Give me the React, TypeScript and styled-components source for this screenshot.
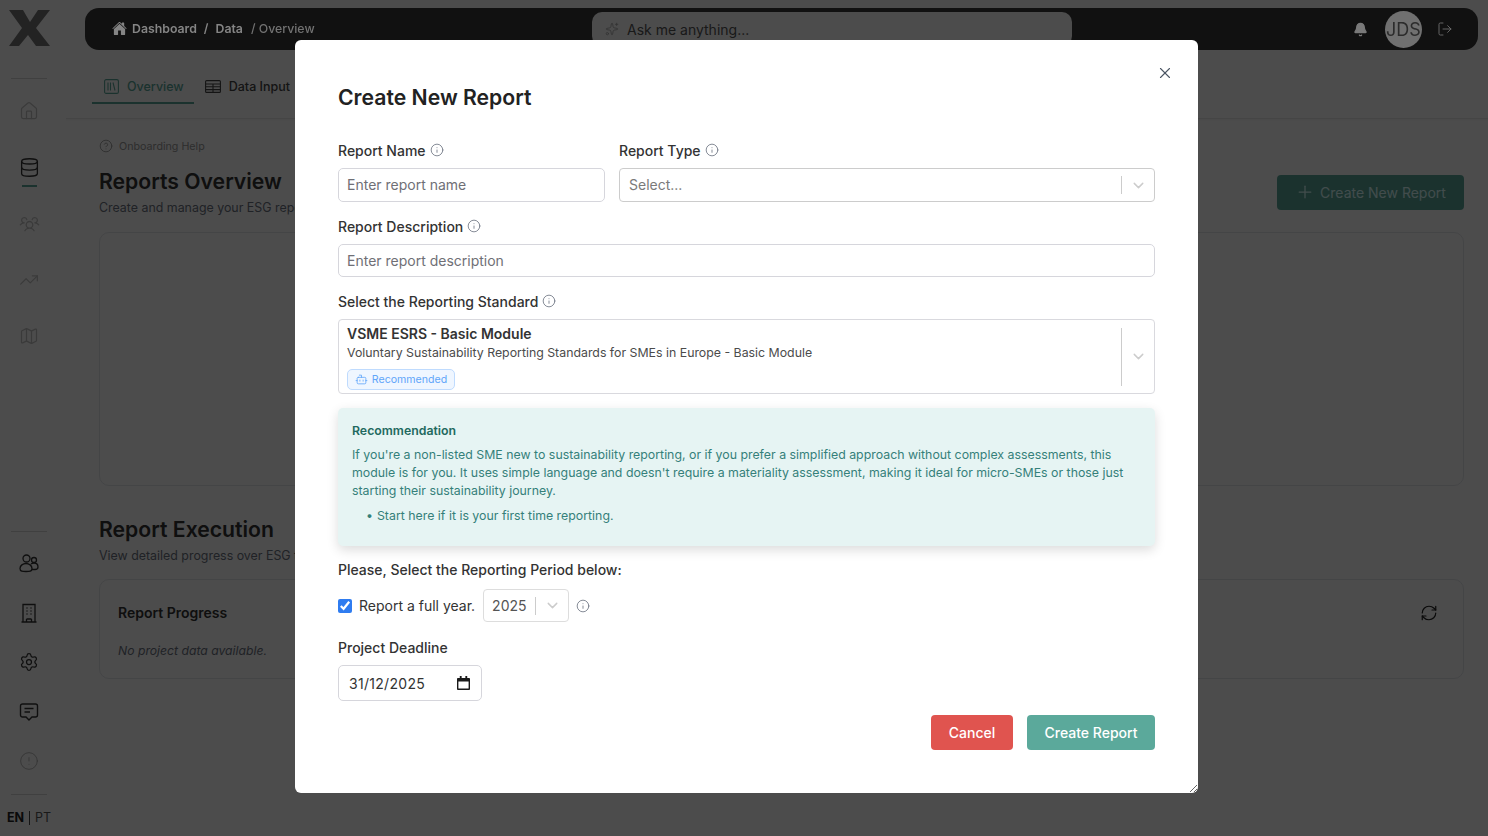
import React from 'react'
import styled, { createGlobalStyle } from 'styled-components'
import {
  Bell,
  Bot,
  ChevronDown,
  CircleAlert,
  CircleHelp,
  Database,
  Home,
  Info,
  LogOut,
  Map as MapIcon,
  Plus,
  RefreshCw,
  Settings,
  Sparkles,
  TrendingUp,
  X,
} from 'lucide-react'
import { IoHome } from 'react-icons/io5'
import { PiUsersThree } from 'react-icons/pi'

const App: React.FC = () => {
  return (
    <>
      <GlobalStyle />
      <Page>
        <Sidebar>
          <LogoBox>
            <svg width="41" height="36" viewBox="0 0 41 36">
              <path d="M0 0H14L21 12 29 0H41L27 18 41 36H27L19 25 10 36H0L13 18Z" fill="#777" />
            </svg>
          </LogoBox>
          <SideRule />
          <SideGroup>
            <SideItem $faint><Home size={20} strokeWidth={1.5} /></SideItem>
            <SideItem $active>
              <Database size={21} strokeWidth={1.5} />
              <ActiveMark />
            </SideItem>
            <SideItem $faint><PiUsersThree size={21} /></SideItem>
            <SideItem $faint><TrendingUp size={20} strokeWidth={1.5} /></SideItem>
            <SideItem $faint><MapIcon size={20} strokeWidth={1.5} /></SideItem>
          </SideGroup>
          <SideSpacer />
          <SideRule />
          <LowerGroup>
            <LowerItem>
              <svg width="20" height="20" viewBox="0 0 20 20" fill="none" stroke="currentColor" strokeWidth="1.300">
                <circle cx="7.500" cy="5.500" r="3.500" />
                <circle cx="15" cy="7" r="2.500" />
                <path d="M1 15.500c0-3 3-5 6-5s6 2 6 5-2.500 3-6 3-6 0-6-3z" />
                <path d="M12 11c1-.7 2-1 3-1 2.500 0 4 1.800 4 4s-1.500 2.500-3 2.500h-3" />
              </svg>
            </LowerItem>
            <LowerItem>
              <svg width="20" height="20" viewBox="0 0 20 20" fill="none" stroke="currentColor" strokeWidth="1.300">
                <path d="M4 19V1.500h12V19M2.500 19h15" />
                <path d="M7.500 16v3M12.500 16v3M7.500 16h5" />
                <path d="M7.500 5h1M11.500 5h1M7.500 8h1M11.500 8h1M7.500 11h1M11.500 11h1" />
              </svg>
            </LowerItem>
            <LowerItem><Settings size={20} strokeWidth={1.5} /></LowerItem>
            <LowerItem>
              <svg width="20" height="20" viewBox="0 0 20 20" fill="none" stroke="currentColor" strokeWidth="1.400">
                <path d="M3.500 2h13A2 2 0 0 1 18.500 4v9a2 2 0 0 1-2 2H13l-3 3-3-3H3.500a2 2 0 0 1-2-2V4a2 2 0 0 1 2-2z" />
                <path d="M5.500 6.500h9M5.500 10h5.500" />
              </svg>
            </LowerItem>
            <LowerItem $faint><CircleAlert size={20} strokeWidth={1} /></LowerItem>
          </LowerGroup>
          <SideRule />
          <Lang>
            <strong>EN</strong>
            <LangBar />
            <span>PT</span>
          </Lang>
        </Sidebar>

        <Main>
          <TopBar>
            <Crumbs>
              <IoHome size={15} />
              <b>Dashboard</b>
              <b>/</b>
              <b>Data</b>
              <CrumbLast>/ Overview</CrumbLast>
            </Crumbs>
            <SearchBox>
              <Sparkles size={14} strokeWidth={1.5} />
              <span>Ask me anything...</span>
            </SearchBox>
            <TopActions>
              <Bell size={15} fill="#7a7a7a" color="#7a7a7a" />
              <Avatar>JDS</Avatar>
              <LogOut size={16} strokeWidth={1.5} />
            </TopActions>
          </TopBar>

          <Tabs>
            <Tab $active>
              <svg width="15" height="15" viewBox="0 0 15 15" fill="none" stroke="currentColor" strokeWidth="1.100">
                <rect x="0.600" y="0.600" width="13.800" height="13.800" rx="1.500" />
                <path d="M4 3.500v8M6.500 3.500v8M9 3.500l2 8" />
              </svg>
              Overview
            </Tab>
            <Tab>
              <svg width="16" height="13" viewBox="0 0 16 13" fill="none" stroke="currentColor" strokeWidth="1.100">
                <rect x="0.600" y="0.600" width="14.800" height="11.800" rx="1" />
                <path d="M0.600 4h14.800M0.600 6.800h14.800M0.600 9.600h14.800M8 4v8.400" />
              </svg>
              Data Input
            </Tab>
          </Tabs>

          <Content>
            <HelpLink>
              <CircleHelp size={14} strokeWidth={1.5} />
              Onboarding Help
            </HelpLink>
            <TitleRow>
              <div>
                <PageTitle>Reports Overview</PageTitle>
                <PageSub>Create and manage your ESG reports</PageSub>
              </div>
              <NewButton>
                <Plus size={20} strokeWidth={1.5} />
                Create New Report
              </NewButton>
            </TitleRow>
            <EmptyCard />
            <PageTitle>Report Execution</PageTitle>
            <PageSub>View detailed progress over ESG topics</PageSub>
            <ProgressCard>
              <div>
                <ProgressTitle>Report Progress</ProgressTitle>
                <NoData>No project data available.</NoData>
              </div>
              <RefreshCw size={18} color="#222" strokeWidth={1.6} />
            </ProgressCard>
          </Content>
        </Main>
      </Page>

      <Overlay>
        <Modal>
          <CloseButton>
            <X size={18} strokeWidth={1.5} />
          </CloseButton>
          <ModalTitle>Create New Report</ModalTitle>

          <TwoCols>
            <Field>
              <Label>Report Name <Info size={14} strokeWidth={1.4} /></Label>
              <TextInput placeholder="Enter report name" readOnly />
            </Field>
            <Field>
              <Label>Report Type <Info size={14} strokeWidth={1.4} /></Label>
              <SelectBox>
                <SelectValue>Select...</SelectValue>
                <SelectDivider />
                <SelectArrow><ChevronDown size={17} strokeWidth={2} /></SelectArrow>
              </SelectBox>
            </Field>
          </TwoCols>

          <Field>
            <Label>Report Description <Info size={14} strokeWidth={1.4} /></Label>
            <TextInput $short placeholder="Enter report description" readOnly />
          </Field>

          <Field>
            <Label>Select the Reporting Standard <Info size={14} strokeWidth={1.4} /></Label>
            <StandardBox>
              <StandardText>
                <StandardName>VSME ESRS - Basic Module</StandardName>
                <StandardDesc>Voluntary Sustainability Reporting Standards for SMEs in Europe - Basic Module</StandardDesc>
                <Badge>
                  <Bot size={13} strokeWidth={1.5} />
                  Recommended
                </Badge>
              </StandardText>
              <SelectDivider $tall />
              <SelectArrow><ChevronDown size={17} strokeWidth={2} /></SelectArrow>
            </StandardBox>
          </Field>

          <RecBox>
            <RecTitle>Recommendation</RecTitle>
            <RecText>
              If you're a non-listed SME new to sustainability reporting, or if you prefer a simplified approach without
              complex assessments, this module is for you. It uses simple language and doesn't require a materiality
              assessment, making it ideal for micro-SMEs or those just starting their sustainability journey.
            </RecText>
            <RecList>
              <li>Start here if it is your first time reporting.</li>
            </RecList>
          </RecBox>

          <PeriodLabel>Please, Select the Reporting Period below:</PeriodLabel>
          <PeriodRow>
            <CheckLabel>
              <Check type="checkbox" defaultChecked />
              Report a full year.
            </CheckLabel>
            <YearSelect>
              <YearValue>2025</YearValue>
              <SelectDivider />
              <SelectArrow><ChevronDown size={17} strokeWidth={2} /></SelectArrow>
            </YearSelect>
            <Info size={14} strokeWidth={1.4} color="#6b7280" />
          </PeriodRow>

          <DeadlineLabel>Project Deadline</DeadlineLabel>
          <DateBox>
            31/12/2025
            <svg width="13" height="14" viewBox="0 0 14 15">
              <path d="M3 0h2v2h4V0h2v2h2a1 1 0 0 1 1 1v11a1 1 0 0 1-1 1H1a1 1 0 0 1-1-1V3a1 1 0 0 1 1-1h2zM1.500 6v7.500h11V6z" fill="#1a1a1a" />
            </svg>
          </DateBox>

          <Footer>
            <CancelButton>Cancel</CancelButton>
            <SubmitButton>Create Report</SubmitButton>
          </Footer>
        </Modal>
      </Overlay>
    </>
  )
}

const GlobalStyle = createGlobalStyle`
  html, body {
    margin: 0;
    height: 100%;
    background: #fff;
  }
  * {
    box-sizing: border-box;
  }
  body {
    font-family: Inter, "Liberation Sans", sans-serif;
    overflow: hidden;
  }
`

const Page = styled.div`
  display: flex;
  height: 836px;
  background: #fff;
`

const Sidebar = styled.aside`
  width: 66px;
  flex: none;
  display: flex;
  flex-direction: column;
  align-items: center;
  padding-right: 8px;
`

const LogoBox = styled.div`
  height: 78px;
  display: flex;
  align-items: flex-start;
  padding-top: 10px;
`

const SideRule = styled.div`
  width: 36px;
  height: 1px;
  flex: none;
  background: #d8d8d8;
`

const SideGroup = styled.div`
  display: flex;
  flex-direction: column;
  align-items: center;
  padding-top: 22px;
  gap: 36.200px;
`

const SideItem = styled.div<{ $faint?: boolean; $active?: boolean }>`
  position: relative;
  display: flex;
  justify-content: center;
  height: 20px;
  color: ${(props) => (props.$faint ? '#c4c4c4' : '#333')};
`

const ActiveMark = styled.span`
  position: absolute;
  left: 3px;
  bottom: -10px;
  width: 15px;
  height: 2px;
  background: #5ba99b;
`

const SideSpacer = styled.div`
  flex: 1;
`

const LowerGroup = styled.div`
  display: flex;
  flex-direction: column;
  align-items: center;
  padding: 21px 0 23px;
  gap: 29.500px;
`

const LowerItem = styled.div<{ $faint?: boolean }>`
  height: 20px;
  color: ${(props) => (props.$faint ? '#aaa' : '#333')};
`

const Lang = styled.div`
  height: 41px;
  padding-top: 4px;
  display: flex;
  align-items: center;
  gap: 5px;
  font-size: 12.500px;
  color: #555;

  strong {
    font-weight: 700;
    color: #222;
  }
`

const LangBar = styled.span`
  width: 1px;
  height: 14px;
  background: #444;
`

const Main = styled.main`
  flex: 1;
  min-width: 0;
  display: flex;
  flex-direction: column;
`

const TopBar = styled.header`
  height: 42px;
  margin: 8px 10px 0 19px;
  padding: 0 25px 0 27px;
  display: flex;
  align-items: center;
  background: #393939;
  border-radius: 14px;
`

/* the breadcrumb and the actions read brighter than the dimming allows */
const Crumbs = styled.div`
  position: relative;
  z-index: 1;
  width: 480px;
  padding-bottom: 2px;
  display: flex;
  align-items: center;
  gap: 7px;
  font-size: 12.300px;
  color: #858585;

  b {
    font-weight: 600;
  }

  svg {
    margin-right: -2px;
  }
`

const CrumbLast = styled.span`
  margin-left: 1px;
  font-weight: 500;
  color: #737373;
`

const SearchBox = styled.div`
  width: 480px;
  height: 34px;
  padding: 0 13px;
  display: flex;
  align-items: center;
  gap: 8px;
  border-radius: 10px;
  background: #fff;
  font-size: 14px;
  color: #555;

  svg {
    color: #aaa;
  }
`

const TopActions = styled.div`
  position: relative;
  z-index: 1;
  margin-left: auto;
  display: flex;
  align-items: center;
  color: #666;
  gap: 16px;
`

const Avatar = styled.div`
  width: 37px;
  height: 37px;
  margin: 0 -1px 0 1px;
  border-radius: 50%;
  background: #707070;
  display: flex;
  align-items: center;
  justify-content: center;
  font-size: 18px;
  color: #2c2c2c;
`

const Tabs = styled.nav`
  height: 68px;
  margin-left: 26px;
  padding-top: 20px;
  display: flex;
  align-items: flex-start;
`

const Tab = styled.div<{ $active?: boolean }>`
  height: 34px;
  padding: 0 10px 0 ${(props) => (props.$active ? '12px' : '11px')};
  display: flex;
  align-items: center;
  gap: 8px;
  font-size: 12.500px;
  font-weight: 500;
  color: ${(props) => (props.$active ? '#5ba99b' : '#444')};
  border-bottom: 2px solid ${(props) => (props.$active ? '#5ba99b' : 'transparent')};
`

const Content = styled.div`
  flex: 1;
  padding: 19px 24px 0 33px;
  border-top: 1px solid #e6e6e6;
  box-shadow: inset 0 4px 4px -4px rgba(0, 0, 0, 0.08);
`

const HelpLink = styled.div`
  display: flex;
  align-items: center;
  gap: 6px;
  height: 16px;
  font-size: 10.700px;
  color: #999;
`

const TitleRow = styled.div`
  margin-top: 12px;
  display: flex;
  align-items: flex-start;
  justify-content: space-between;
`

const PageTitle = styled.h2`
  margin: 0;
  height: 30px;
  line-height: 30px;
  font-size: 21.200px;
  font-weight: 600;
  color: #333;
`

const PageSub = styled.p`
  margin: 3px 0 0;
  height: 18px;
  line-height: 18px;
  font-size: 12.400px;
  color: #6b7280;
`

const NewButton = styled.div`
  width: 187px;
  height: 35px;
  margin-top: 9px;
  padding-bottom: 1px;
  display: flex;
  align-items: center;
  justify-content: center;
  gap: 5px;
  border-radius: 4px;
  background: #5ba99b;
  color: #dff;
  font-size: 14px;
`

const EmptyCard = styled.div`
  height: 254px;
  margin: 15px 0 28px;
  border: 1px solid #e5e7eb;
  border-radius: 10px;
`

const ProgressCard = styled.div`
  height: 100px;
  margin-top: 14px;
  padding: 23px 25px 0 18px;
  display: flex;
  align-items: flex-start;
  justify-content: space-between;
  border: 1px solid #e5e7eb;
  border-radius: 10px;

  svg {
    margin-top: 1px;
  }
`

const ProgressTitle = styled.div`
  height: 20px;
  line-height: 20px;
  font-size: 14px;
  font-weight: 600;
  color: #333;
`

const NoData = styled.div`
  margin-top: 20px;
  font-size: 12.200px;
  font-style: italic;
  color: #6b7280;
`

const Overlay = styled.div`
  position: fixed;
  inset: 0;
  padding: 40px 0 0 295px;
  background: rgba(0, 0, 0, 0.7);
`

const Modal = styled.div`
  position: relative;
  z-index: 2;
  width: 903px;
  height: 753px;
  padding: 43px 43px 0;
  background: #fff;
  border-radius: 6px;
  overflow: hidden;
  resize: both;
  display: flex;
  flex-direction: column;
`

const CloseButton = styled.div`
  position: absolute;
  top: 24px;
  right: 24px;
  display: flex;
  color: #4b5563;
`

const ModalTitle = styled.h2`
  margin: 0 0 31px;
  height: 28px;
  line-height: 28px;
  font-size: 21.200px;
  font-weight: 600;
  color: #222;
`

const TwoCols = styled.div`
  display: grid;
  grid-template-columns: 267px 536px;
  gap: 14px;
`

const Field = styled.div`
  margin-bottom: 16px;
`

const Label = styled.div`
  height: 16px;
  margin-bottom: 10px;
  display: flex;
  align-items: center;
  gap: 4px;
  font-size: 14px;
  font-weight: 500;
  color: #333;

  svg {
    color: #6b7280;
  }
`

const TextInput = styled.input<{ $short?: boolean }>`
  display: block;
  width: 100%;
  height: ${(props) => (props.$short ? '33px' : '34px')};
  padding: 0 9px ${(props) => (props.$short ? '0' : '2px')} 8px;
  border: 1px solid #d6d6dc;
  border-radius: 5px;
  outline: none;
  font: 400 14px Inter, sans-serif;

  &::placeholder {
    color: #6f6f76;
  }
`

const SelectBox = styled.div`
  height: 34px;
  padding-left: 9px;
  display: flex;
  align-items: center;
  border: 1px solid #ccc;
  border-radius: 4px;
`

const SelectValue = styled.span`
  flex: 1;
  margin-top: -2px;
  font-size: 14px;
  color: #7a7a7a;
`

const SelectDivider = styled.span<{ $tall?: boolean }>`
  width: 1px;
  flex: none;
  height: ${(props) => (props.$tall ? '58px' : '18px')};
  background: #ccc;
`

const SelectArrow = styled.span`
  width: 32px;
  display: flex;
  justify-content: center;
  color: #ccc;
`

const StandardBox = styled.div`
  height: 75px;
  margin-top: 1px;
  padding-left: 8px;
  display: flex;
  align-items: center;
  border: 1px solid #d9d9de;
  border-radius: 4px;
`

const StandardText = styled.div`
  flex: 1;
  padding-top: 1px;
`

const StandardName = styled.div`
  line-height: 18px;
  font-size: 14px;
  font-weight: 600;
  color: #333;
`

const StandardDesc = styled.div`
  margin-top: 2px;
  line-height: 16px;
  font-size: 12.340px;
  color: #4b4b4b;
`

const Badge = styled.span`
  margin-top: 8px;
  width: 108px;
  height: 21px;
  display: flex;
  align-items: center;
  justify-content: center;
  gap: 4px;
  font-size: 10.600px;
  color: #60a5fa;
  background: #eff6ff;
  border: 1px solid #bfdbfe;
  border-radius: 5px;
`

const RecBox = styled.section`
  height: 138px;
  margin-top: -2px;
  padding: 14px 14px 0;
  background: #e6f4f3;
  border-radius: 5px;
  box-shadow: 0 4px 12px rgba(0, 0, 0, 0.14);
`

const RecTitle = styled.div`
  height: 18px;
  line-height: 18px;
  font-size: 12.300px;
  font-weight: 600;
  color: #22695e;
`

const RecText = styled.p`
  margin: 6px 0 0;
  line-height: 18px;
  font-size: 12.350px;
  color: #35807a;
`

const RecList = styled.ul`
  margin: 7px 0 0;
  padding: 0 0 0 14px;
  list-style: none;
  line-height: 18px;
  font-size: 12.350px;
  color: #35807a;

  li::before {
    content: '•';
    margin-right: 4px;
  }
`

const PeriodLabel = styled.div`
  margin-top: 15px;
  height: 18px;
  line-height: 18px;
  font-size: 14px;
  font-weight: 500;
  color: #333;
`

const PeriodRow = styled.div`
  margin-top: 10px;
  height: 33px;
  display: flex;
  align-items: center;
  gap: 8px;
`

const CheckLabel = styled.label`
  display: flex;
  align-items: center;
  gap: 7px;
  font-size: 14px;
  color: #333;
`

const Check = styled.input`
  width: 14px;
  height: 14px;
  margin: 0;
  accent-color: #2f7cf0;
`

const YearSelect = styled.div`
  width: 86px;
  height: 33px;
  margin-right: -1px;
  padding-left: 8px;
  display: flex;
  align-items: center;
  border: 1px solid #ddd;
  border-radius: 4px;
`

const YearValue = styled.span`
  flex: 1;
  font-size: 14px;
  color: #555;
`

const DeadlineLabel = styled.div`
  margin-top: 17px;
  height: 18px;
  line-height: 18px;
  font-size: 14px;
  font-weight: 500;
  color: #333;
`

const DateBox = styled.div`
  width: 144px;
  height: 36px;
  margin-top: 8px;
  padding: 0 11px 0 10px;
  display: flex;
  align-items: center;
  justify-content: space-between;
  border: 1px solid #d6d6dc;
  border-radius: 5px;
  font-size: 14px;
  letter-spacing: 0.3px;
  color: #333;
`

const Footer = styled.div`
  margin-top: 14px;
  display: flex;
  justify-content: flex-end;
  gap: 14px;
`

const CancelButton = styled.div`
  width: 82px;
  height: 35px;
  display: flex;
  align-items: center;
  justify-content: center;
  border-radius: 4px;
  background: #e0544f;
  color: #fff;
  font-size: 14px;
  font-weight: 500;
`

const SubmitButton = styled(CancelButton)`
  width: 128px;
  background: #5ba99b;
`

export default App
